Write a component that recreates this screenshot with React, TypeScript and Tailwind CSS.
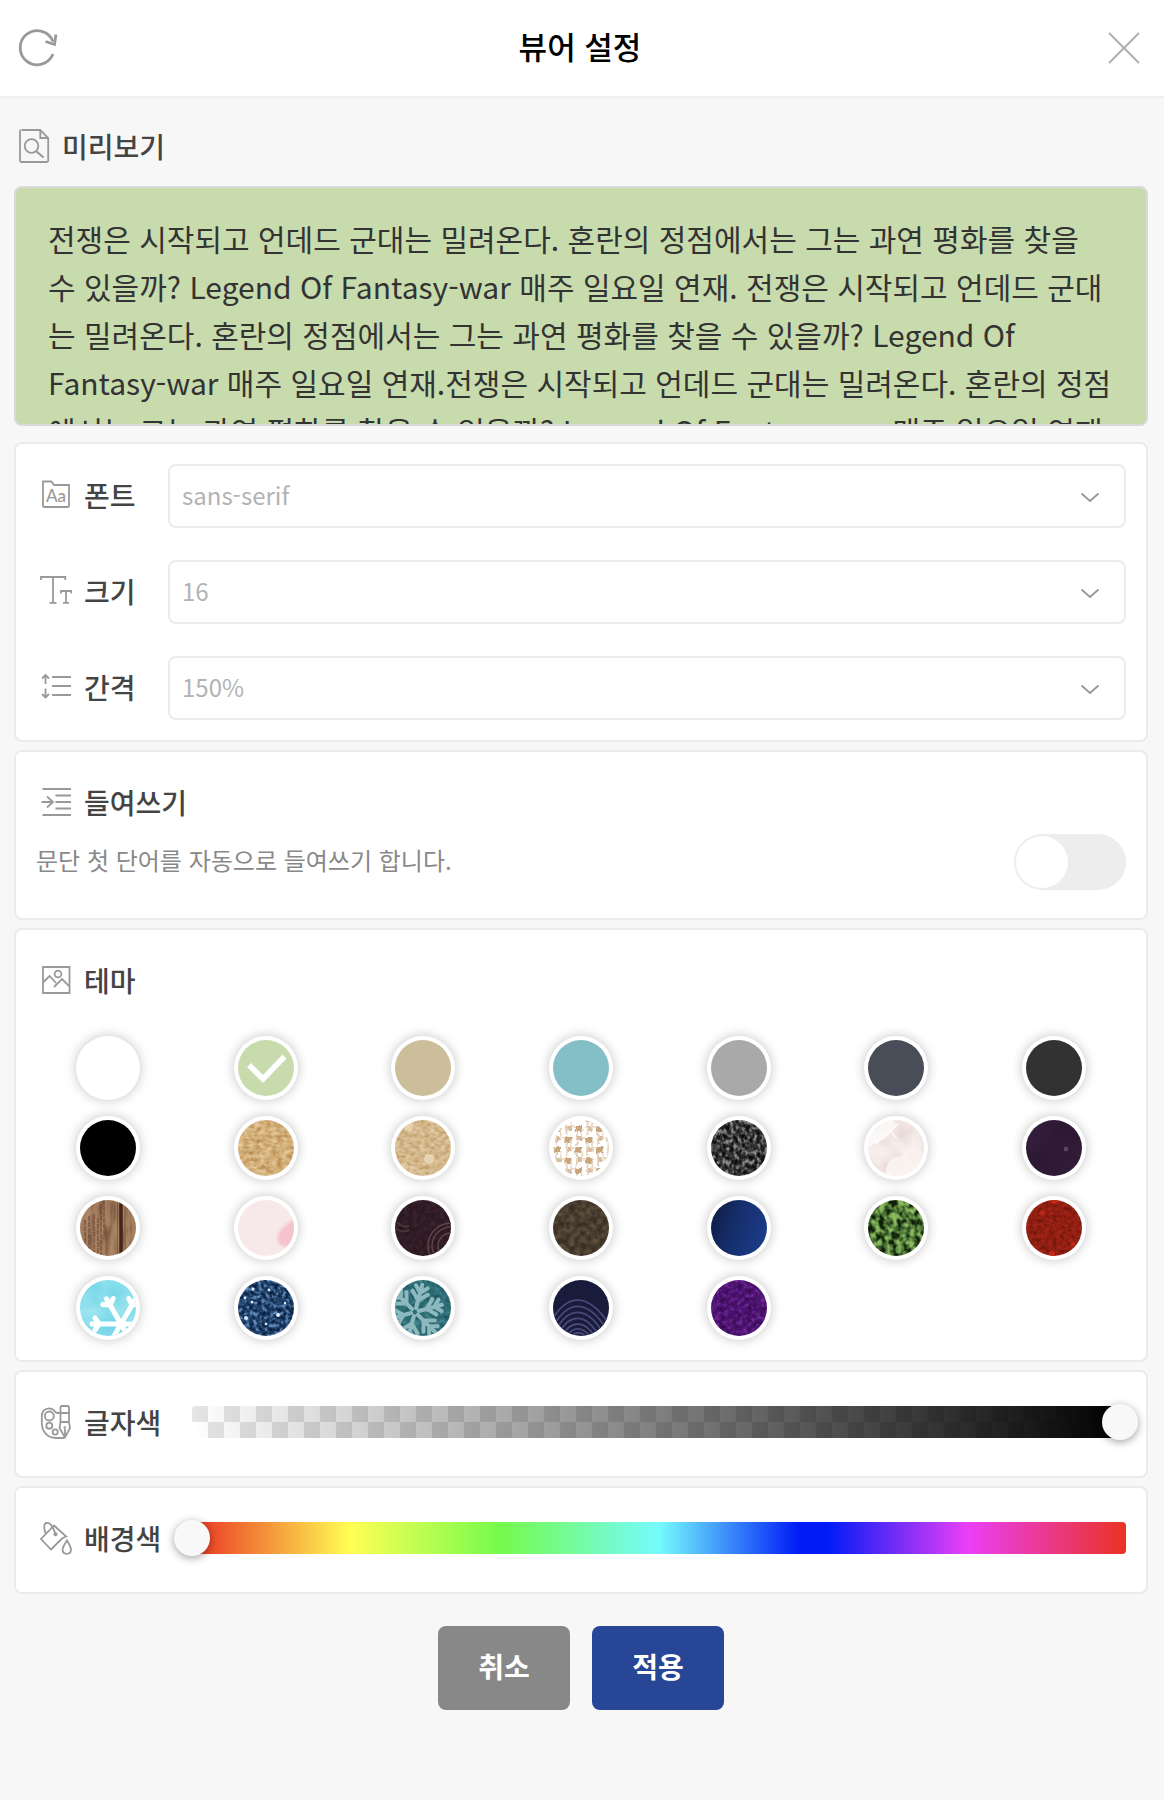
import { useState } from "react";
import type { ReactNode } from "react";

const PREVIEW_TEXT =
  "전쟁은 시작되고 언데드 군대는 밀려온다. 혼란의 정점에서는 그는 과연 평화를 찾을 수 있을까? Legend Of Fantasy-war 매주 일요일 연재. 전쟁은 시작되고 언데드 군대는 밀려온다. 혼란의 정점에서는 그는 과연 평화를 찾을 수 있을까? Legend Of Fantasy-war 매주 일요일 연재.전쟁은 시작되고 언데드 군대는 밀려온다. 혼란의 정점에서는 그는 과연 평화를 찾을 수 있을까? Legend Of Fantasy-war 매주 일요일 연재.";

/* ---------- icons ---------- */

function Icon({ children }: { children: ReactNode }) {
  return (
    <svg
      className="h-9 w-8 shrink-0"
      viewBox="0 0 32 36"
      fill="none"
      stroke="#999999"
      strokeWidth="1.8"
      aria-hidden="true"
    >
      {children}
    </svg>
  );
}

const PreviewIcon = () => (
  <Icon>
    <path d="M4 1H22.3L30.2 9V31.5Q30.2 33 28.700 33H3.500Q2 33 2 31.500V2.500Q2 1 3.500 1" />
    <path d="M22.3 1V9H30.2" />
    <circle cx="13.500" cy="17" r="6.800" />
    <path d="M18 22L25.500 28.500" strokeWidth="2.200" />
  </Icon>
);

const FontIcon = () => (
  <Icon>
    <path d="M3 3.500H11.500L14 7H29V28Q29 29 28 29H4Q3 29 3 28Z" />
    <text
      x="6"
      y="23.500"
      fontFamily="Lato, sans-serif"
      fontSize="17"
      fill="#999999"
      stroke="none"
    >
      Aa
    </text>
  </Icon>
);

const SizeIcon = () => (
  <Icon>
    <path d="M1 6V3H25.300V6M13 3V28.500M9.500 28.800H16.500" />
    <path d="M21 19.500V17H31.300V19.500M26 17V28.500M23 28.800H29" />
  </Icon>
);

const SpacingIcon = () => (
  <Icon>
    <path d="M12 7H31M12 16H31M12 25H31" />
    <path d="M5.500 14V5M2 8.500L5.500 5L9 8.500M5.500 18.500V27.500M2 24L5.500 27.500L9 24" />
  </Icon>
);

const IndentIcon = () => (
  <Icon>
    <path d="M2.500 4H31M15.500 10.500H31M15.500 17H31M15.500 23.500H31M2.500 30H31" />
    <path d="M1.500 17H13M7 11.500L13 17L7 22.500" />
  </Icon>
);

const ThemeIcon = () => (
  <Icon>
    <path d="M3 4H29.500V30H3Z" />
    <circle cx="18" cy="11" r="3.400" />
    <path d="M3.500 19L9.500 13L16 20M14 24L22 16L29 23" />
  </Icon>
);

const PaletteIcon = () => (
  <Icon>
    <circle cx="9.300" cy="12" r="4.500" />
    <circle cx="9.300" cy="21.700" r="3" />
    <circle cx="15.200" cy="28" r="2.600" />
    <path d="M20.300 9H17.500Q16 9 15 7.500C13 4.800 11 4.300 9 4.300C4.500 4.300 1.800 8 1.800 12V19C1.800 28 8 34 16 34H24.500" />
    <path d="M20.500 18V3.500Q20.500 2 22 2H27.500Q29 2 29 3.500V18L30 24L25 33.500L19.500 24ZM20.500 9H29M20.500 18H29M25 25V33" />
    <circle cx="24.800" cy="23.500" r="1.300" fill="#999999" stroke="none" />
  </Icon>
);

const BucketIcon = () => (
  <Icon>
    <path d="M14 5.500L26.300 16.500Q23 17.500 21 19.500L11 29.500L1 19Z" />
    <path d="M5.500 13.500C3.500 8 4 3.500 6.200 3C8.500 2.500 11 4 13 8C14 10 14.800 12 15.300 14" />
    <circle cx="15.500" cy="14.300" r="2" fill="#999999" stroke="none" />
    <path d="M27 20.500C29 24 31 27 31 29.500C31 32 29.300 33.800 26.800 33.800C24.300 33.800 22.600 32 22.600 29.500C22.600 27 25 24 27 20.500Z" />
  </Icon>
);

/* ---------- swatches ---------- */

interface NoiseProps {
  id: string;
  freq: string;
  seed?: number;
  dark: string;
  mid: string;
  light: string;
  octaves?: number;
  spread?: number;
}

function channel(hex: string, index: number) {
  return parseInt(hex.slice(1 + index * 2, 3 + index * 2), 16) / 255;
}

/* Fractal noise mapped on a dark-mid-light colour ramp. */
function Noise({ id, freq, seed = 1, dark, mid, light, octaves = 2, spread = 2 }: NoiseProps) {
  const table = (i: number) =>
    [dark, mid, light].map((c) => channel(c, i).toFixed(3)).join(" ");
  const offset = (1 - spread) / 2;
  const row = `${spread} 0 0 0 ${offset}`;
  return (
    <>
      <filter id={id} x="0" y="0" width="100%" height="100%" colorInterpolationFilters="sRGB">
        <feTurbulence type="fractalNoise" baseFrequency={freq} numOctaves={octaves} seed={seed} />
        <feColorMatrix values={`${row} ${row} ${row} 0 0 0 0 1`} />
        <feComponentTransfer>
          <feFuncR type="table" tableValues={table(0)} />
          <feFuncG type="table" tableValues={table(1)} />
          <feFuncB type="table" tableValues={table(2)} />
        </feComponentTransfer>
      </filter>
      <rect width="56" height="56" filter={`url(#${id})`} />
    </>
  );
}

const Fill = ({ color }: { color: string }) => <rect width="56" height="56" fill={color} />;

function Linen() {
  const cells: ReactNode[] = [];
  for (let r = 0; r < 4; r++) {
    for (let c = 0; c < 6; c++) {
      const x = c * 10.500 + 1;
      const y = r * 21 + (c % 2 ? 4 : 14) - 8;
      cells.push(
        <g key={`${r}-${c}`}>
          <rect x={x} y={y} width="7" height="6" fill="#c9a57b" />
          <rect x={x + 1} y={y + 10} width="6" height="5" fill="#d8bb98" />
          <rect x={x + 1} y={y + 5} width="2" height="14" fill="#e6d3bf" />
          <rect x={x + 6} y={y + 3} width="1.500" height="9" fill="#ead9c6" />
          <rect x={x - 4} y={y} width="5" height="1.500" fill="#ead9c6" />
        </g>,
      );
    }
  }
  return (
    <>
      <Fill color="#ffffff" />
      <filter id="linen-soft" colorInterpolationFilters="sRGB">
        <feTurbulence type="fractalNoise" baseFrequency="0.25" numOctaves={2} seed={4} />
        <feDisplacementMap in="SourceGraphic" scale="4" xChannelSelector="R" yChannelSelector="G" />
        <feGaussianBlur stdDeviation="0.6" />
      </filter>
      <g filter="url(#linen-soft)">{cells}</g>
    </>
  );
}

function Snowflake({ color, width, arm }: { color: string; width: number; arm: string }) {
  return (
    <g stroke={color} strokeWidth={width} strokeLinecap="round" fill="none">
      {[0, 60, 120, 180, 240, 300].map((a) => (
        <path key={a} transform={`rotate(${a})`} d={arm} />
      ))}
    </g>
  );
}

interface Theme {
  name: string;
  art: ReactNode;
}

const THEMES: Theme[] = [
  { name: "화이트", art: <Fill color="#ffffff" /> },
  { name: "연두", art: <Fill color="#c8dbad" /> },
  { name: "베이지", art: <Fill color="#ccbe9a" /> },
  { name: "하늘", art: <Fill color="#84bec6" /> },
  { name: "그레이", art: <Fill color="#a9a9a9" /> },
  { name: "슬레이트", art: <Fill color="#484d57" /> },
  { name: "차콜", art: <Fill color="#323232" /> },
  { name: "블랙", art: <Fill color="#000000" /> },
  {
    name: "코르크",
    art: <Noise id="cork" freq="0.18 0.26" seed={3} dark="#b98a4e" mid="#d3b07a" light="#e8cd9e" spread={1.600} />,
  },
  {
    name: "한지",
    art: (
      <>
        <Noise id="paper" freq="0.2 0.28" seed={7} dark="#bf9663" mid="#d4b88c" light="#e6d1ab" spread={1.500} />
        <circle cx="14" cy="7" r="4.500" fill="#ecdcba" opacity="0.7" />
        <circle cx="34" cy="39" r="5" fill="#ecdcba" opacity="0.8" />
        <circle cx="10" cy="46" r="3" fill="#ecdcba" opacity="0.5" />
      </>
    ),
  },
  { name: "리넨", art: <Linen /> },
  {
    name: "블랙 패브릭",
    art: <Noise id="fabric" freq="0.26 0.2" seed={5} dark="#0c0c0c" mid="#363636" light="#8c8c8c" spread={2.200} />,
  },
  {
    name: "꽃잎",
    art: (
      <>
        <Noise id="petal" freq="0.05" seed={2} dark="#e8d8d5" mid="#f1e5e2" light="#f7efed" />
        <path d="M0 0H24L28 5L20 12L12 20L0 28Z" fill="#ffffff" opacity="0.7" />
        <path d="M8 24L22 9M14 20L30 4M22 10L29 19" stroke="#ffffff" strokeWidth="1.200" />
        <circle cx="33" cy="51" r="15" fill="#fbf5f2" opacity="0.9" />
        <circle cx="45" cy="38" r="11" fill="#faf3f0" opacity="0.8" />
      </>
    ),
  },
  {
    name: "자주",
    art: (
      <>
        <Noise id="plum" freq="0.03" seed={4} dark="#2c1732" mid="#301b37" light="#36203f" spread={1.400} />
        <circle cx="40" cy="29" r="2.300" fill="#5a4766" />
      </>
    ),
  },
  {
    name: "나무",
    art: (
      <>
        <Noise id="wood" freq="0.2 0.04" seed={8} dark="#76523c" mid="#a27d5e" light="#b08a69" spread={1.500} />
        <path
          d="M5 20V56M9 16V56M14 14V56M18 18V56M21 4V56M24 0V28"
          stroke="#6b4733"
          strokeWidth="1.300"
          strokeDasharray="5 1"
          opacity="0.8"
        />
        <path d="M41 0V56" stroke="#43251a" strokeWidth="3.500" />
        <path d="M37.500 0V56M45 0V56" stroke="#805b43" strokeWidth="1" />
      </>
    ),
  },
  {
    name: "벚꽃",
    art: (
      <>
        <Fill color="#f7e9e9" />
        <filter id="blossom-soft">
          <feGaussianBlur stdDeviation="1.5" />
        </filter>
        <path
          d="M62 17C48 22 37 32 40 42C43 49 52 48 62 40Z"
          fill="#f5c3cb"
          filter="url(#blossom-soft)"
        />
      </>
    ),
  },
  {
    name: "와인",
    art: (
      <>
        <Noise id="wine" freq="0.22" seed={6} dark="#28151e" mid="#311c26" light="#3a2730" spread={1.500} />
        <g fill="none" stroke="#5d4548" strokeWidth="1.500">
          <circle cx="56" cy="46" r="23" />
          <circle cx="56" cy="46" r="19" />
          <circle cx="56" cy="46" r="13" />
          <path d="M0 28Q6 34 14 30M2 22Q7 28 14 26" stroke="#4a3a38" />
        </g>
      </>
    ),
  },
  {
    name: "브라운",
    art: <Noise id="brown" freq="0.18" seed={9} dark="#362b20" mid="#493d30" light="#63543f" spread={1.600} />,
  },
  {
    name: "네이비",
    art: (
      <>
        <linearGradient id="navy" x1="0" y1="0.300" x2="1" y2="0.600">
          <stop offset="0" stopColor="#0e1d45" />
          <stop offset="0.400" stopColor="#152d6a" />
          <stop offset="1" stopColor="#1c3c88" />
        </linearGradient>
        <Fill color="url(#navy)" />
      </>
    ),
  },
  {
    name: "잔디",
    art: <Noise id="grass" freq="0.17 0.15" seed={12} dark="#101f0a" mid="#4c7434" light="#8cbb62" spread={2.600} />,
  },
  {
    name: "레드",
    art: (
      <>
        <Noise id="red" freq="0.26" seed={3} dark="#6a140a" mid="#911f12" light="#ab2819" spread={1.400} />
        <circle cx="16" cy="13" r="2.500" fill="#bb2a19" />
        <circle cx="28" cy="1" r="3" fill="#c22b19" />
        <circle cx="47" cy="44" r="2.500" fill="#bb2a19" />
        <circle cx="26" cy="54" r="3" fill="#c22b19" />
      </>
    ),
  },
  {
    name: "눈꽃",
    art: (
      <>
        <Noise id="ice" freq="0.05" seed={2} dark="#70d3e5" mid="#86ddeb" light="#9ee5f0" spread={1.400} />
        <g transform="translate(41 44) rotate(-30)">
          <Snowflake color="#ffffff" width={5} arm="M0 0V-29M0 -22L-6 -26M0 -22L6 -26" />
        </g>
      </>
    ),
  },
  {
    name: "밤하늘",
    art: (
      <>
        <Noise id="night" freq="0.25" seed={5} dark="#0a1e3e" mid="#21426b" light="#648dbf" spread={2} />
        <g fill="#dcebff">
          <circle cx="15" cy="9" r="1.600" />
          <circle cx="31" cy="10" r="1.400" />
          <circle cx="7" cy="18" r="1.400" />
          <circle cx="14" cy="22" r="1.500" />
          <circle cx="8" cy="38" r="2" />
          <circle cx="40" cy="35" r="2" />
          <circle cx="28" cy="44" r="1.300" />
          <circle cx="47" cy="23" r="1.200" />
        </g>
      </>
    ),
  },
  {
    name: "겨울",
    art: (
      <>
        <Noise id="winter" freq="0.2" seed={5} dark="#1f555e" mid="#2f6d77" light="#4b8a92" spread={1.500} />
        <g transform="translate(20 32) rotate(15)">
          <Snowflake
            color="#8bb9bd"
            width={4}
            arm="M0 -4V-28M0 -20L-6 -26M0 -20L6 -26M0 -12L-8 -20M0 -12L8 -20"
          />
        </g>
      </>
    ),
  },
  {
    name: "물결",
    art: (
      <>
        <Fill color="#191b3b" />
        <g fill="none" stroke="#474978" strokeWidth="1.800">
          <path d="M-2 42C14 12 36 12 58 47" />
          <path d="M0 47C15 19 35 19 54 50" />
          <path d="M3 50C16 26 34 26 50 53" />
          <path d="M6 53C17 33 33 33 46 56" />
          <path d="M10 55C18 40 32 40 42 57" />
          <path d="M13 57C20 46 30 46 38 58" />
          <path d="M17 58C22 51 28 51 34 58" />
        </g>
      </>
    ),
  },
  {
    name: "퍼플",
    art: <Noise id="purple" freq="0.22" seed={11} dark="#360b50" mid="#4d1370" light="#742a9c" spread={1.600} />,
  },
];

function Swatch({
  theme,
  checked,
  onSelect,
}: {
  theme: Theme;
  checked: boolean;
  onSelect: () => void;
}) {
  return (
    <label className="relative block size-16 cursor-pointer rounded-full bg-white p-1 shadow-[0_0_12px_rgba(0,0,0,0.24)]">
      <input
        type="radio"
        name="theme"
        aria-label={theme.name}
        checked={checked}
        onChange={onSelect}
        className="sr-only"
      />
      <svg className="size-14 overflow-hidden rounded-full" viewBox="0 0 56 56" aria-hidden="true">
        {theme.art}
        {checked && (
          <path d="M11 25L25 39L46.500 16.500" fill="none" stroke="#ffffff" strokeWidth="5.500" />
        )}
      </svg>
    </label>
  );
}

/* ---------- building blocks ---------- */

function Card({ className, children }: { className: string; children: ReactNode }) {
  return (
    <section className={`rounded-lg border-2 border-[#ebebeb] bg-white ${className}`}>
      {children}
    </section>
  );
}

const HEADING = "flex h-[46px] items-center gap-3 pl-1 text-[28px] leading-[42px] font-medium text-[#444444]";

function SelectRow({
  id,
  label,
  icon,
  options,
}: {
  id: string;
  label: string;
  icon: ReactNode;
  options: string[];
}) {
  return (
    <div className="flex items-center">
      <label htmlFor={id} className={`${HEADING} w-[132px] shrink-0`}>
        {icon}
        <span className="pb-0.5">{label}</span>
      </label>
      <div className="relative grow">
        <select
          id={id}
          className="block h-16 w-full appearance-none rounded-lg border-2 border-[#ebebeb] bg-white px-3 pb-0.5 text-2xl text-[#b3b3b3]"
        >
          {options.map((o) => (
            <option key={o}>{o}</option>
          ))}
        </select>
        <svg
          className="pointer-events-none absolute top-6 right-[26px] h-5 w-5"
          viewBox="0 0 20 20"
          fill="none"
          stroke="#999999"
          strokeWidth="2"
          aria-hidden="true"
        >
          <path d="M1.500 5.500L10 13L18.500 5.500" />
        </svg>
      </div>
    </div>
  );
}

function SliderRow({
  id,
  label,
  icon,
  track,
  initial,
}: {
  id: string;
  label: string;
  icon: ReactNode;
  track: string;
  initial: number;
}) {
  const [value, setValue] = useState(initial);
  return (
    <div className="flex items-center">
      <label htmlFor={id} className={`${HEADING} w-[156px] shrink-0`}>
        {icon}
        <span>{label}</span>
      </label>
      <div className={`relative h-8 grow rounded ${track}`}>
        <input
          id={id}
          type="range"
          min={0}
          max={100}
          value={value}
          onChange={(e) => setValue(Number(e.target.value))}
          className="absolute -inset-y-0.5 -left-[18px] h-9 w-[calc(100%+30px)] cursor-pointer appearance-none bg-transparent [&::-webkit-slider-thumb]:size-9 [&::-webkit-slider-thumb]:appearance-none [&::-webkit-slider-thumb]:rounded-full [&::-webkit-slider-thumb]:bg-[#f8f8f8] [&::-webkit-slider-thumb]:shadow-[0_2px_8px_rgba(0,0,0,0.37)]"
        />
      </div>
    </div>
  );
}

export default function App() {
  const [theme, setTheme] = useState(1);
  return (
    <div
      lang="ko"
      className="min-h-screen bg-[#f7f7f7] pb-10 font-['Noto_Sans_CJK_KR','Noto_Sans_CJK_SC',sans-serif]"
    >
      <header className="relative flex h-24 items-center justify-between bg-white px-4 shadow-[0_0_4px_rgba(0,0,0,0.1)]">
        <button type="button" aria-label="초기화" className="cursor-pointer">
          <svg className="size-11" viewBox="0 0 44 44" fill="none" stroke="#999999" strokeWidth="2.800">
            <path d="M37 28A17 17 0 1 1 37 15.500" />
            <path d="M40 8.500L38.500 18.500L29.500 15.500" />
          </svg>
        </button>
        <h1 className="pb-1 text-[31px] leading-12 font-medium text-black">뷰어 설정</h1>
        <button type="button" aria-label="닫기" className="cursor-pointer">
          <svg className="size-12" viewBox="0 0 48 48" fill="none" stroke="#b0b0b0" strokeWidth="2">
            <path d="M9 9L39 39M39 9L9 39" />
          </svg>
        </button>
      </header>

      <main className="flex flex-col gap-2 pt-7 pr-4 pl-3.5">
        <section className="mb-2">
          <h2 className={HEADING}>
            <PreviewIcon />
            <span className="pb-0.5">미리보기</span>
          </h2>
          <div className="mt-4 h-60 overflow-hidden rounded-lg border-2 border-[#d9d9d9] bg-[#c8dbad] pt-[26px] pr-[34px] pl-8">
            <p className="text-[30px] leading-12 text-[#333333]">{PREVIEW_TEXT}</p>
          </div>
        </section>

        <Card className="flex flex-col gap-8 p-5">
          <SelectRow id="font" label="폰트" icon={<FontIcon />} options={["sans-serif", "serif", "monospace"]} />
          <SelectRow id="size" label="크기" icon={<SizeIcon />} options={["16", "18", "20"]} />
          <SelectRow id="spacing" label="간격" icon={<SpacingIcon />} options={["150%", "175%", "200%"]} />
        </Card>

        <Card className="px-5 py-7">
          <h2 className={HEADING}>
            <IndentIcon />
            <span className="pb-0.5">들여쓰기</span>
          </h2>
          <div className="mt-2 flex items-center justify-between">
            <label htmlFor="indent" className="pb-1 text-2xl text-[#888888]">
              문단 첫 단어를 자동으로 들여쓰기 합니다.
            </label>
            <input
              id="indent"
              type="checkbox"
              role="switch"
              className="h-14 w-28 shrink-0 cursor-pointer appearance-none rounded-full bg-[#ededed] p-0.5 before:block before:size-[52px] before:rounded-full before:bg-white checked:bg-[#284696] checked:before:ml-auto"
            />
          </div>
        </Card>

        <Card className="pt-7 pb-5">
          <h2 className={`${HEADING} mx-5`}>
            <ThemeIcon />
            <span className="pb-0.5">테마</span>
          </h2>
          <div role="radiogroup" aria-label="테마" className="mt-8 grid grid-cols-7 justify-items-center gap-y-4 px-[13px]">
            {THEMES.map((t, i) => (
              <Swatch key={t.name} theme={t} checked={theme === i} onSelect={() => setTheme(i)} />
            ))}
          </div>
        </Card>

        <Card className="px-5 pt-[27px] pb-[31px]">
          <SliderRow
            id="text-color"
            label="글자색"
            icon={<PaletteIcon />}
            initial={100}
            track="bg-[linear-gradient(to_right,transparent,#000),repeating-conic-gradient(#fff_0_25%,#e5e5e5_0_50%)] bg-[length:100%_100%,32px_32px]"
          />
        </Card>

        <Card className="px-5 pt-[27px] pb-[31px]">
          <SliderRow
            id="background-color"
            label="배경색"
            icon={<BucketIcon />}
            initial={0}
            track="bg-[linear-gradient(to_right,#ea3323_0%,#ffff54_17%,#75fb4c_33%,#75fbfd_50%,#001bf6_65%,#001bf6_68%,#ea3ff7_83%,#ea3323_100%)]"
          />
        </Card>

        <div className="mt-6 flex justify-center gap-[22px] text-[28px] font-bold text-white">
          <button type="button" className="h-[84px] w-[132px] cursor-pointer rounded-lg bg-[#888888] pb-1">
            취소
          </button>
          <button type="button" className="h-[84px] w-[132px] cursor-pointer rounded-lg bg-[#284696] pb-1">
            적용
          </button>
        </div>
      </main>
    </div>
  );
}
